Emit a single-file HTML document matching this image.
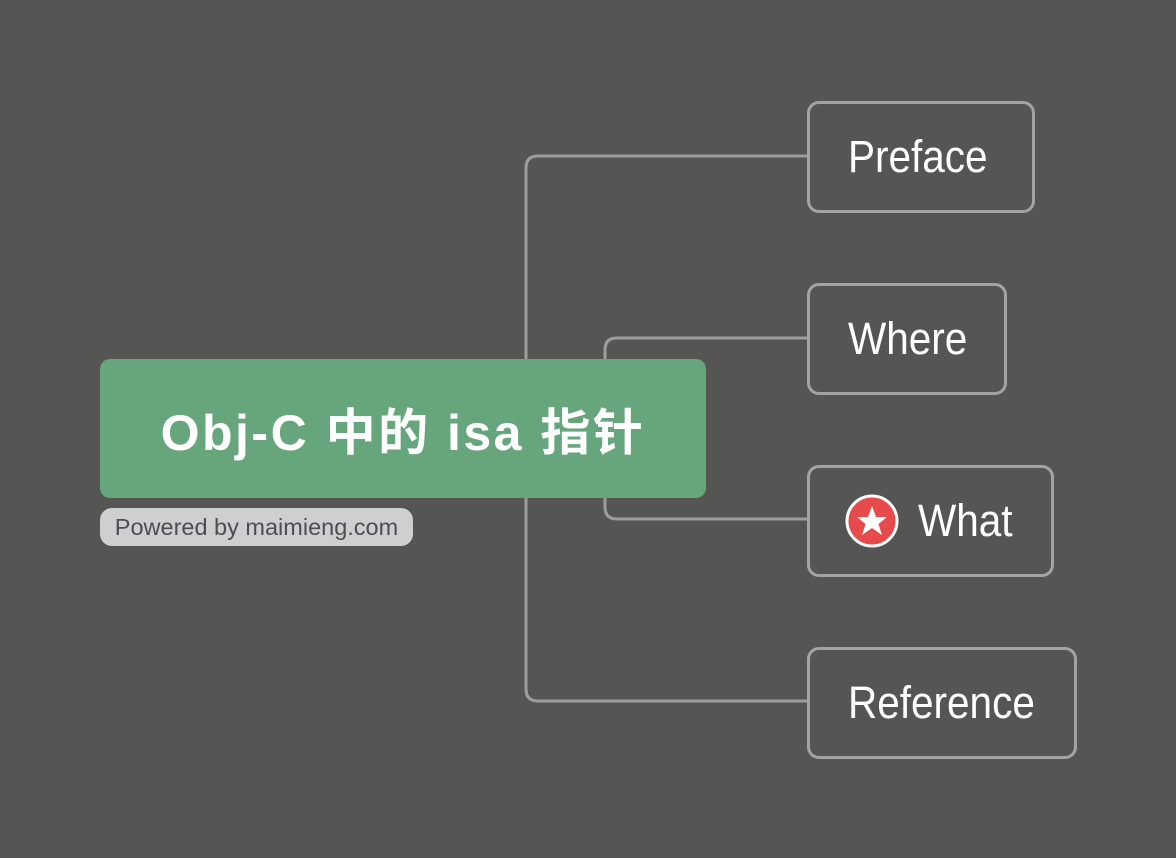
<!DOCTYPE html>
<html><head><meta charset="utf-8"><style>
body{margin:0;width:1176px;height:858px;background:#555653;position:relative;overflow:hidden;font-family:"Liberation Sans","Noto Sans CJK SC",sans-serif}
.root{position:absolute;left:100px;top:359px;width:606px;height:139px;background:#67a57c;border-radius:10px;color:#fff;font-weight:bold;font-size:50px;letter-spacing:2.5px;display:flex;align-items:center;justify-content:center}
.pw{position:absolute;left:100px;top:508px;width:313px;height:38px;background:#cfcfcf;border-radius:12px;color:#4a4f55;font-size:23.5px;font-family:"Liberation Sans",sans-serif;line-height:38px;text-align:center;white-space:nowrap}
.n{position:absolute;box-sizing:border-box;border:3px solid #a3a4a1;border-radius:12px;color:#fff;font-size:45px;display:flex;align-items:center;padding-left:38px}
.t{display:inline-block;transform:scaleX(0.9);transform-origin:left center;white-space:nowrap}
</style></head><body>
<svg width="1176" height="858" style="position:absolute;left:0;top:0">
<g fill="none" stroke="#9d9e9b" stroke-width="3">
<path d="M808 156 H538 Q526 156 526 168 V689 Q526 701 538 701 H808"/>
<path d="M808 338 H617 Q605 338 605 350 V507 Q605 519 617 519 H808"/>
</g></svg>
<div class="root">Obj-C 中的 isa 指针</div>
<div class="pw">Powered by maimieng.com</div>
<div class="n" style="left:807px;top:101px;width:228px;height:112px"><span class="t">Preface</span></div>
<div class="n" style="left:807px;top:283px;width:200px;height:112px"><span class="t">Where</span></div>
<div class="n" style="left:807px;top:465px;width:247px;height:112px;padding-left:34px">
<svg width="56" height="56" viewBox="0 0 56 56" style="margin-right:18px;flex:none"><circle cx="28" cy="28" r="25" fill="#e64a4a" stroke="#fff" stroke-width="3"/><path d="M28 13 L32 24 L43 24 L34.5 31 L38 42 L28 35 L18 42 L21.5 31 L13 24 L24 24 Z" fill="#fff"/></svg><span class="t">What</span></div>
<div class="n" style="left:807px;top:647px;width:270px;height:112px"><span class="t">Reference</span></div>
</body></html>
